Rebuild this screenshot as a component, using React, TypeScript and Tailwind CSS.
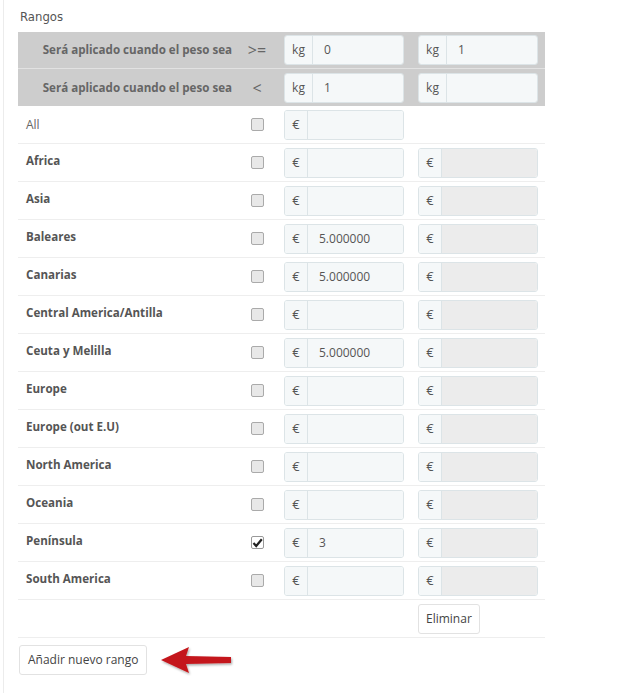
const font = { fontFamily: '"Open Sans", "Noto Sans", sans-serif' };

type Zone = { name: string; checked?: boolean; a?: string; b?: string; enabled?: boolean };

const zones: Zone[] = [
  { name: "Africa" },
  { name: "Asia" },
  { name: "Baleares", a: "5.000000" },
  { name: "Canarias", a: "5.000000" },
  { name: "Central America/Antilla" },
  { name: "Ceuta y Melilla", a: "5.000000" },
  { name: "Europe" },
  { name: "Europe (out E.U)" },
  { name: "North America" },
  { name: "Oceania" },
  { name: "Península", checked: true, a: "3", enabled: true },
  { name: "South America" },
];

function Field({ unit, value, enabled = true, wide = false }: { unit: string; value?: string; enabled?: boolean; wide?: boolean }) {
  return (
    <div className="flex h-[30px] w-[120px] overflow-hidden rounded-[3px] border border-[#dce4e7]">
      <span
        className={`flex items-center justify-center border-r border-[#dce4e7] bg-[#f5f8f9] text-[#555] ${wide ? "w-[28px] text-[12px]" : "w-[23px] text-[13px]"}`}
      >
        {unit}
      </span>
      <span
        className={`flex flex-1 items-center pl-[11px] text-[12px] text-[#555] ${enabled ? "bg-[#f5f8f9]" : "bg-[#ececec]"}`}
      >
        {value}
      </span>
    </div>
  );
}

function Check({ checked }: { checked?: boolean }) {
  if (checked) {
    return (
      <span className="flex h-[13px] w-[13px] items-center justify-center rounded-[2px] border border-[#999] bg-white">
        <svg width="11" height="10" viewBox="0 0 11 10">
          <path d="M1.5 5 L4.2 8 L9.8 1.2" fill="none" stroke="#222" strokeWidth="2.2" />
        </svg>
      </span>
    );
  }
  return <span className="block h-[13px] w-[13px] rounded-[2px] border border-[#aaa] bg-[#e8e8e8]" />;
}

function HeaderRow({ op, a, b, last }: { op: string; a?: string; b?: string; last?: boolean }) {
  return (
    <div className={`grid h-[37px] grid-cols-[219px_40px_134px_134px] items-center bg-[#cdcdcd] ${last ? "" : "border-b border-[#e2e2e2]"}`}>
      <div className="pr-[5px] text-right text-[11.6px] font-bold text-[#666]">Será aplicado cuando el peso sea</div>
      <div className="text-center text-[16px] text-[#666]">{op}</div>
      <div className="pl-[7px]">
        <Field unit="kg" value={a} wide />
      </div>
      <div className="pl-[7px]">
        <Field unit="kg" value={b} wide />
      </div>
    </div>
  );
}

export default function App() {
  return (
    <div className="min-h-[693px] bg-white" style={font}>
      <div className="ml-[3px] min-h-[693px] border-l border-[#ececec] pl-[14px] pt-[7px]">
        <div
          className="mb-[5px] h-[20px] pl-[2px] text-[13px] leading-[20px] text-[#555]"
          style={{ fontFamily: '"DejaVu Sans Condensed", "Liberation Sans Narrow", sans-serif' }}
        >
          Rangos
        </div>
        <div className="w-[527px]">
          <HeaderRow op=">=" a="0" b="1" />
          <HeaderRow op="<" a="1" last />

          <div className="grid h-[38px] grid-cols-[219px_40px_134px_134px] items-center border-b border-[#eeeeee]">
            <div className="pl-2 text-[12px] text-[#666]">All</div>
            <div className="flex justify-center">
              <Check />
            </div>
            <div className="pl-[7px]">
              <Field unit="€" />
            </div>
            <div />
          </div>

          {zones.map((z) => (
            <div
              key={z.name}
              className="grid h-[38px] grid-cols-[219px_40px_134px_134px] items-center border-b border-[#eeeeee]"
            >
              <div className="-mt-1 pl-2 text-[11.6px] font-bold text-[#555]">{z.name}</div>
              <div className="flex justify-center">
                <Check checked={z.checked} />
              </div>
              <div className="pl-[7px]">
                <Field unit="€" value={z.a} enabled={z.enabled} />
              </div>
              <div className="pl-[7px]">
                <Field unit="€" value={z.b} enabled={false} />
              </div>
            </div>
          ))}

          <div className="grid h-[38px] grid-cols-[219px_40px_134px_134px] items-center border-b border-[#eeeeee]">
            <div />
            <div />
            <div />
            <div className="pl-[7px]">
              <button className="h-[30px] rounded-[3px] border border-[#e2e2e2] bg-white px-[7px] text-[12px] text-[#444]">
                Eliminar
              </button>
            </div>
          </div>
        </div>

        <div className="mt-[6px] flex items-center gap-[12px] pl-px">
          <button className="h-[30px] rounded-[3px] border border-[#e2e2e2] bg-white px-[8px] text-[12px] text-[#444]">
            Añadir nuevo rango
          </button>
          <svg width="76" height="32" viewBox="0 0 76 32">
            <defs>
              <filter id="sh" x="-10%" y="-20%" width="130%" height="150%">
                <feDropShadow dx="1" dy="1.5" stdDeviation="1.2" floodColor="#000" floodOpacity="0.35" />
              </filter>
            </defs>
            <path
              d="M2 16 L30 3 L27 12 L72 13 L72 19 L27 20 L30 29 Z"
              fill="#c4161c"
              filter="url(#sh)"
            />
          </svg>
        </div>
      </div>
    </div>
  );
}
